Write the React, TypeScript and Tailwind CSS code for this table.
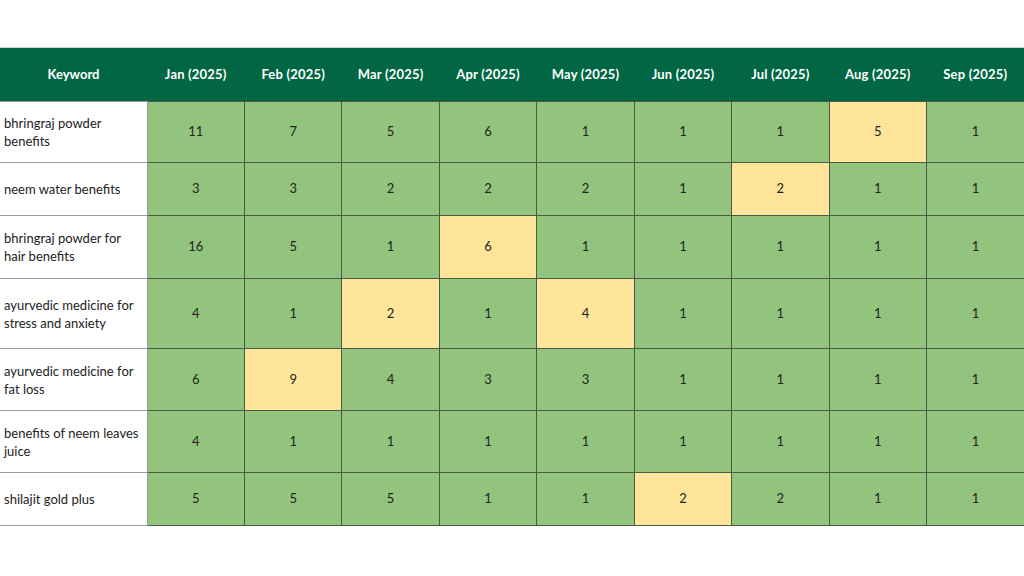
const months = ['Jan', 'Feb', 'Mar', 'Apr', 'May', 'Jun', 'Jul', 'Aug', 'Sep'];

// [keyword, row height, values, index of yellow cells]
const rows: { kw: string; h: string; vals: number[]; hi: number[] }[] = [
  { kw: 'bhringraj powder benefits', h: 'h-[61px]', vals: [11, 7, 5, 6, 1, 1, 1, 5, 1], hi: [7] },
  { kw: 'neem water benefits', h: 'h-[53px]', vals: [3, 3, 2, 2, 2, 1, 2, 1, 1], hi: [6] },
  { kw: 'bhringraj powder for hair benefits', h: 'h-[63px]', vals: [16, 5, 1, 6, 1, 1, 1, 1, 1], hi: [3] },
  { kw: 'ayurvedic medicine for stress and anxiety', h: 'h-[70px]', vals: [4, 1, 2, 1, 4, 1, 1, 1, 1], hi: [2, 4] },
  { kw: 'ayurvedic medicine for fat loss', h: 'h-[62px]', vals: [6, 9, 4, 3, 3, 1, 1, 1, 1], hi: [1] },
  { kw: 'benefits of neem leaves juice', h: 'h-[62px]', vals: [4, 1, 1, 1, 1, 1, 1, 1, 1], hi: [] },
  { kw: 'shilajit gold plus', h: 'h-[53px]', vals: [5, 5, 5, 1, 1, 2, 2, 1, 1], hi: [5] },
];

export default function App() {
  return (
    <div className="w-[1024px] h-[576px] bg-white pt-[47px] font-['Lato','Liberation_Sans',sans-serif] text-[#222]">
      <table className="w-[1024px] table-fixed border-collapse">
        <colgroup>
          <col className="w-[147px]" />
          {months.map(m => <col key={m} />)}
        </colgroup>
        <thead>
          <tr className="h-[54px] bg-[#006643] border-t border-[#d0d0d0]">
            <th className="text-[13px] font-bold text-white text-center">Keyword</th>
            {months.map(m => (
              <th key={m} className="text-[13px] font-bold text-white text-center tracking-[0.2px]">{m} (2025)</th>
            ))}
          </tr>
        </thead>
        <tbody>
          {rows.map(r => (
            <tr key={r.kw} className={r.h}>
              <td className="border border-[#9a9a9a] border-l-0 bg-white pl-[4px] pr-[2px] text-[13px] leading-[18px] align-middle">
                {r.kw}
              </td>
              {r.vals.map((v, i) => (
                <td key={i}
                  className={`border border-[#4a5a44] text-center text-[13px] ${r.hi.includes(i) ? 'bg-[#ffe599]' : 'bg-[#93c47d]'} ${i === 8 ? 'border-r-0' : ''}`}>
                  {v}
                </td>
              ))}
            </tr>
          ))}
        </tbody>
      </table>
    </div>
  );
}
